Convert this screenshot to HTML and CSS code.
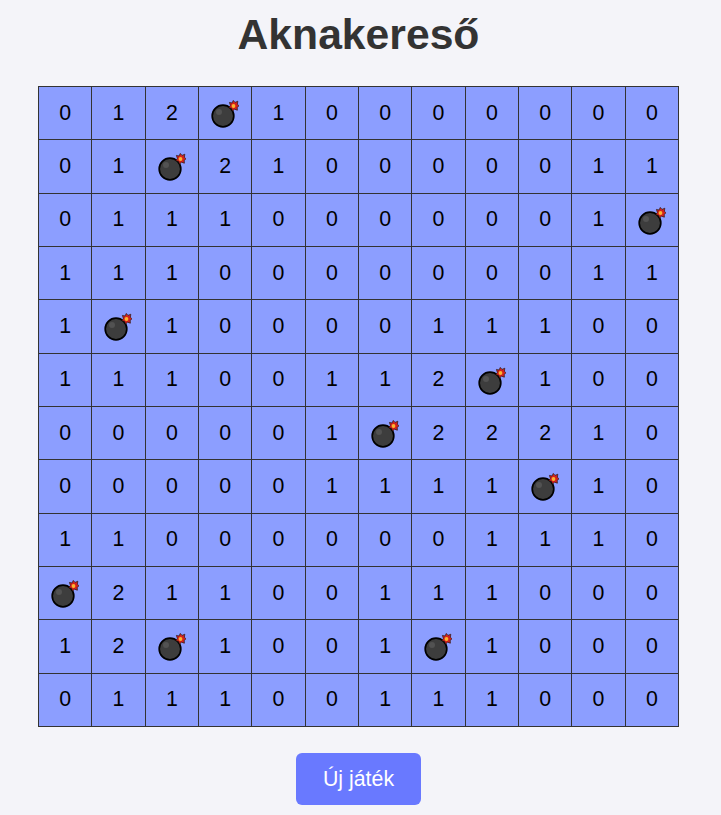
FILE: index.html
```html
<!DOCTYPE html>
<html lang="hu">
<head>
    <meta charset="UTF-8">
    <meta name="viewport" content="width=device-width, initial-scale=1.0">
    <title>Aknakereső</title>
    <link rel="stylesheet" href="styles.css">
</head>
<body>
    <svg class="defs" width="0" height="0">
        <symbol id="bomb" viewBox="0 0 28 28">
            <path d="M17 11 L21 7" stroke="#8a8a8a" stroke-width="3"/>
            <circle cx="12" cy="16" r="10.8" fill="#3d3d3d" stroke="#000" stroke-width="1.7"/>
            <circle cx="8" cy="12" r="3" fill="#525252"/>
            <path d="M22.3 0.4 L24 2.4 L26.8 1.2 L26.4 4.2 L28 5.8 L26.2 7.4 L26.4 10.2 L23.6 9.2 L21.6 11 L20.6 8.4 L17.8 7.6 L19.4 5.4 L18.4 2.4 L21 3 Z" fill="#d3221c" stroke="#2a1512" stroke-width="0.7"/>
            <circle cx="22.5" cy="6" r="1.9" fill="#fbb531"/>
        </symbol>
    </svg>

    <h1>Aknakereső</h1>

    <div class="board">
        <div class="cell">0</div><div class="cell">1</div><div class="cell">2</div><div class="cell"><svg class="bomb"><use href="#bomb"/></svg></div><div class="cell">1</div><div class="cell">0</div><div class="cell">0</div><div class="cell">0</div><div class="cell">0</div><div class="cell">0</div><div class="cell">0</div><div class="cell">0</div>
        <div class="cell">0</div><div class="cell">1</div><div class="cell"><svg class="bomb"><use href="#bomb"/></svg></div><div class="cell">2</div><div class="cell">1</div><div class="cell">0</div><div class="cell">0</div><div class="cell">0</div><div class="cell">0</div><div class="cell">0</div><div class="cell">1</div><div class="cell">1</div>
        <div class="cell">0</div><div class="cell">1</div><div class="cell">1</div><div class="cell">1</div><div class="cell">0</div><div class="cell">0</div><div class="cell">0</div><div class="cell">0</div><div class="cell">0</div><div class="cell">0</div><div class="cell">1</div><div class="cell"><svg class="bomb"><use href="#bomb"/></svg></div>
        <div class="cell">1</div><div class="cell">1</div><div class="cell">1</div><div class="cell">0</div><div class="cell">0</div><div class="cell">0</div><div class="cell">0</div><div class="cell">0</div><div class="cell">0</div><div class="cell">0</div><div class="cell">1</div><div class="cell">1</div>
        <div class="cell">1</div><div class="cell"><svg class="bomb"><use href="#bomb"/></svg></div><div class="cell">1</div><div class="cell">0</div><div class="cell">0</div><div class="cell">0</div><div class="cell">0</div><div class="cell">1</div><div class="cell">1</div><div class="cell">1</div><div class="cell">0</div><div class="cell">0</div>
        <div class="cell">1</div><div class="cell">1</div><div class="cell">1</div><div class="cell">0</div><div class="cell">0</div><div class="cell">1</div><div class="cell">1</div><div class="cell">2</div><div class="cell"><svg class="bomb"><use href="#bomb"/></svg></div><div class="cell">1</div><div class="cell">0</div><div class="cell">0</div>
        <div class="cell">0</div><div class="cell">0</div><div class="cell">0</div><div class="cell">0</div><div class="cell">0</div><div class="cell">1</div><div class="cell"><svg class="bomb"><use href="#bomb"/></svg></div><div class="cell">2</div><div class="cell">2</div><div class="cell">2</div><div class="cell">1</div><div class="cell">0</div>
        <div class="cell">0</div><div class="cell">0</div><div class="cell">0</div><div class="cell">0</div><div class="cell">0</div><div class="cell">1</div><div class="cell">1</div><div class="cell">1</div><div class="cell">1</div><div class="cell"><svg class="bomb"><use href="#bomb"/></svg></div><div class="cell">1</div><div class="cell">0</div>
        <div class="cell">1</div><div class="cell">1</div><div class="cell">0</div><div class="cell">0</div><div class="cell">0</div><div class="cell">0</div><div class="cell">0</div><div class="cell">0</div><div class="cell">1</div><div class="cell">1</div><div class="cell">1</div><div class="cell">0</div>
        <div class="cell"><svg class="bomb"><use href="#bomb"/></svg></div><div class="cell">2</div><div class="cell">1</div><div class="cell">1</div><div class="cell">0</div><div class="cell">0</div><div class="cell">1</div><div class="cell">1</div><div class="cell">1</div><div class="cell">0</div><div class="cell">0</div><div class="cell">0</div>
        <div class="cell">1</div><div class="cell">2</div><div class="cell"><svg class="bomb"><use href="#bomb"/></svg></div><div class="cell">1</div><div class="cell">0</div><div class="cell">0</div><div class="cell">1</div><div class="cell"><svg class="bomb"><use href="#bomb"/></svg></div><div class="cell">1</div><div class="cell">0</div><div class="cell">0</div><div class="cell">0</div>
        <div class="cell">0</div><div class="cell">1</div><div class="cell">1</div><div class="cell">1</div><div class="cell">0</div><div class="cell">0</div><div class="cell">1</div><div class="cell">1</div><div class="cell">1</div><div class="cell">0</div><div class="cell">0</div><div class="cell">0</div>
    </div>

    <button class="new-game" type="button">Új játék</button>
</body>
</html>
```

FILE: styles.css
```css
body {
    margin: 0;
    padding: 0 4px 0 0;
    display: flex;
    flex-direction: column;
    align-items: center;
    font-family: "Liberation Sans", Arial, sans-serif;
    background-color: #f4f4f9;
    color: #333;
}
.defs {
    position: absolute;
}
h1 {
    margin: 8px 0 26px;
    font-size: 42.67px;
    line-height: 52px;
    font-weight: bold;
}
.board {
    display: grid;
    grid-template-columns: repeat(12, 1fr);
    grid-auto-rows: 53.33px;
    width: 641px;
    border-top: 1px solid #333;
    border-left: 1px solid #333;
    box-sizing: border-box;
}
.cell {
    display: flex;
    align-items: center;
    justify-content: center;
    background-color: #8c9eff;
    border-right: 1px solid #333;
    border-bottom: 1px solid #333;
    font-size: 21.33px;
    color: #000;
}
.bomb {
    width: 28px;
    height: 28px;
    margin-top: 2px;
}
.new-game {
    margin-top: 26px;
    padding: 15px 27px;
    background-color: #6979ff;
    color: white;
    border: none;
    border-radius: 6px;
    font-family: inherit;
    font-size: 21.33px;
    line-height: 22px;
    cursor: pointer;
}
```
